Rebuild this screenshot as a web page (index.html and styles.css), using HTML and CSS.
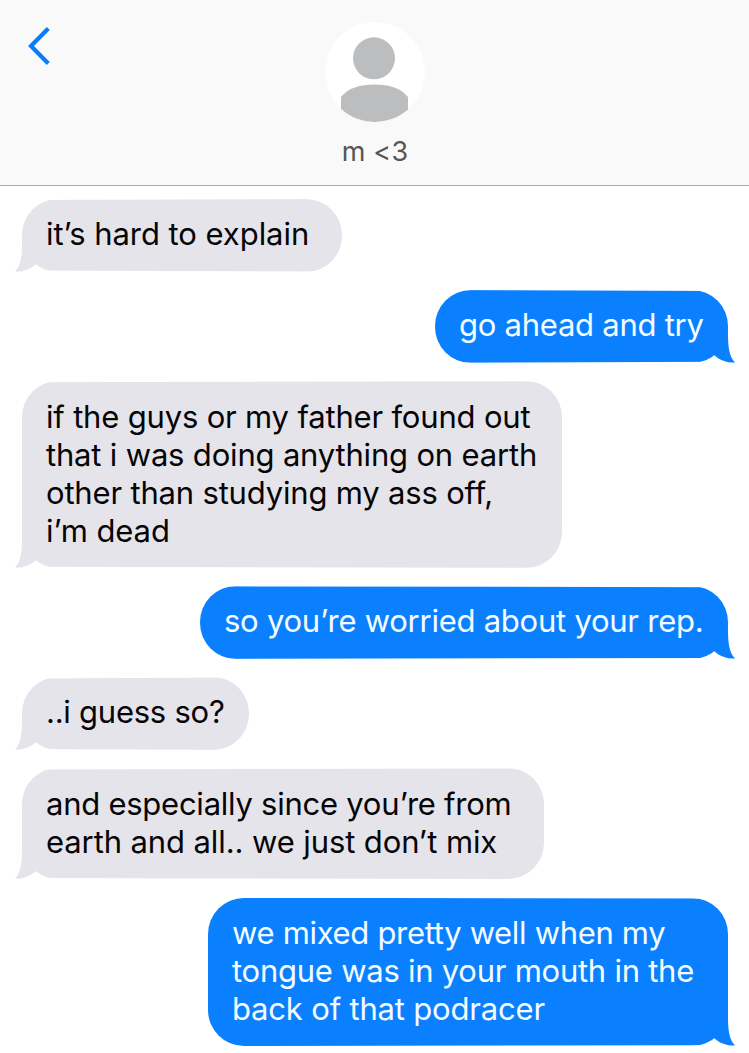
FILE: index.html
```html
<!DOCTYPE html>
<html lang="en">
<head>
<meta charset="utf-8">
<title>Messages</title>
<link rel="stylesheet" href="styles.css">
</head>
<body>
<svg width="0" height="0" class="defs" aria-hidden="true">
  <symbol id="tail" viewBox="0 0 22 38">
    <path d="M7.4 0L7 8C7 22 6 31 0 37.6C8 37.8 15 35.4 21 30V0Z"/>
  </symbol>
</svg>
<header class="header">
  <svg class="back" viewBox="0 0 26 42" aria-label="Back"><path d="M21.3 3.5L4 21L21.3 38.5"/></svg>
  <div class="contact">
    <svg class="avatar" viewBox="0 0 100 100">
      <circle class="avatar-bg" cx="50" cy="50" r="50"/>
      <circle class="avatar-fg" cx="49" cy="36.3" r="21"/>
      <path class="avatar-fg" d="M16 75C23 66 35 62.5 49.5 62.5S76 66 83 75V87.5A50 50 0 0 1 16 86.7Z"/>
    </svg>
    <div class="name">m &lt;3</div>
  </div>
</header>
<main class="thread">
  <div class="bubble received explain">it’s hard to explain<svg class="tail"><use href="#tail"/></svg></div>
  <div class="bubble sent tight try">go ahead and try<svg class="tail"><use href="#tail"/></svg></div>
  <div class="bubble received lowered father"><span class="snug">if the guys or my father found out<br>that i was doing anything on earth<br>other than studying my ass off,</span><br>i’m dead<svg class="tail"><use href="#tail"/></svg></div>
  <div class="bubble sent tight worried">so you’re worried about your rep.<svg class="tail"><use href="#tail"/></svg></div>
  <div class="bubble received tight guess">..i guess so?<svg class="tail"><use href="#tail"/></svg></div>
  <div class="bubble received lowered earth"><span class="tight">and especially since you’re from</span><br>earth and all.. we just don’t mix<svg class="tail"><use href="#tail"/></svg></div>
  <div class="bubble sent podracer"><span class="tighter">we mixed pretty well when my</span><br><span class="tight">tongue was in your mouth in the</span><br><span class="snug">back of that podracer</span><svg class="tail"><use href="#tail"/></svg></div>
</main>
</body>
</html>
```
FILE: styles.css
```css
* { box-sizing: border-box; }
body {
  margin: 0;
  background: #fff;
  font-family: Inter, "Liberation Sans", sans-serif;
  height: 1053px;
  overflow: hidden;
}
.defs { position: absolute; }
.header {
  height: 186px;
  background: #f9f9f9;
  border-bottom: 1px solid #a8a8aa;
  display: grid;
  grid-template-columns: 100px 1fr 99px;
  padding-top: 22px;
}
.back {
  width: 26px;
  height: 42px;
  margin: 3px 0 0 27px;
  fill: none;
  stroke: #0a7cfa;
  stroke-width: 4.2;
}
.contact {
  display: flex;
  flex-direction: column;
  align-items: center;
}
.avatar { width: 100px; height: 100px; }
.avatar-bg { fill: #fff; }
.avatar-fg { fill: #bcbdbf; }
.name {
  margin-top: 13px;
  font-size: 27px;
  line-height: 34px;
  letter-spacing: 0.2px;
  color: #555;
}
.thread {
  display: flex;
  flex-direction: column;
  align-items: flex-start;
  gap: 18.5px;
  padding: 13px 21px 0 22px;
}
.bubble {
  position: relative;
  isolation: isolate;
  padding: 16px 0 18.6px 24px;
  font-size: 31px;
  line-height: 38px;
  letter-spacing: -0.1px;
  white-space: nowrap;
}
.bubble::before {
  content: "";
  position: absolute;
  inset: 0;
  z-index: -1;
  border-radius: 36px;
}
.received { color: #050507; }
.received::before {
  background: #e5e4ea;
  clip-path: polygon(0 1px, 100% 0, 100% 100%, 0 calc(100% - 1px));
}
.sent { align-self: flex-end; color: #f5fcff; }
.sent::before {
  background: #0a80ff;
  clip-path: polygon(0 0, 100% 1px, 100% calc(100% - 1px), 0 100%);
}
.lowered { padding-top: 16.8px; padding-bottom: 17.8px; }

.explain { width: 320px; letter-spacing: -0.05px; }
.try { width: 293px; }
.father { width: 540px; }
.worried { width: 528px; }
.guess { width: 227px; }
.earth { width: 522px; }
.podracer { width: 520px; }

.snug { letter-spacing: -0.18px; }
.tight { letter-spacing: -0.25px; }
.tighter { letter-spacing: -0.32px; }

.tail {
  position: absolute;
  bottom: 0;
  width: 22px;
  height: 38px;
  z-index: -1;
}
.received .tail { left: -7px; fill: #e5e4ea; }
.sent .tail { right: -7px; fill: #0a80ff; transform: scaleX(-1); }
```
